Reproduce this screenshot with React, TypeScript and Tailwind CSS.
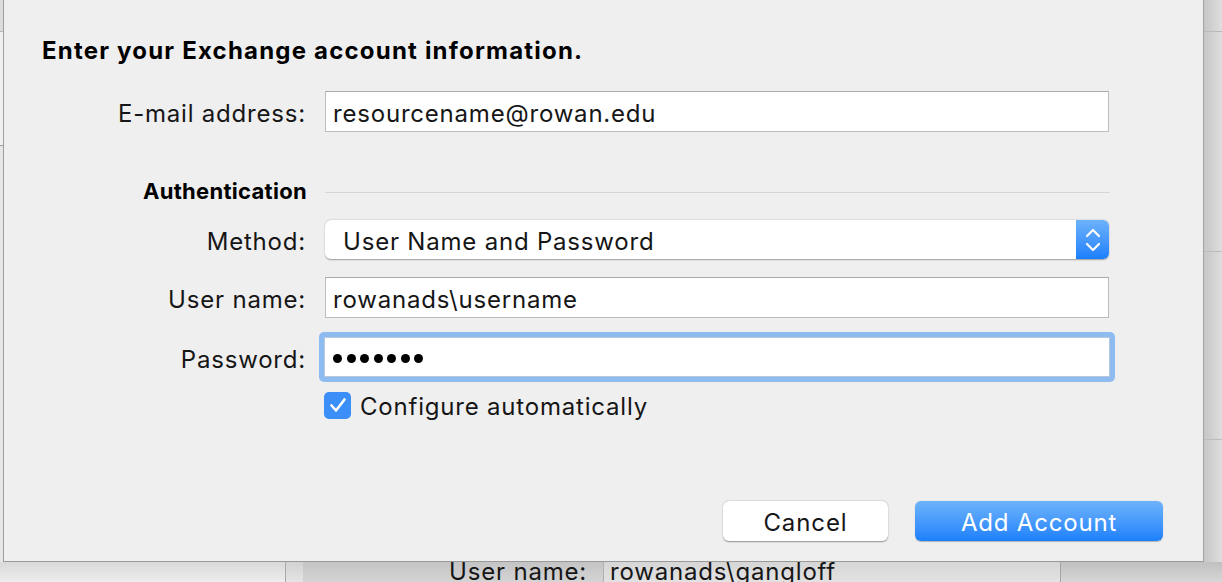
import React from 'react';

const font = { fontFamily: 'Inter, "Noto Sans", sans-serif' };

function Field({ children, className = '' }: { children?: React.ReactNode; className?: string }) {
  return (
    <div
      className={`h-[41px] w-[784px] bg-white border border-[#bdbdbd] border-t-[#a9a9a9] flex items-center pl-[7px] pt-[4px] text-[24px] tracking-[0.8px] text-[#161616] ${className}`}
    >
      {children}
    </div>
  );
}

function Row({ label, children, className = '' }: { label: string; children: React.ReactNode; className?: string }) {
  return (
    <div className={`flex items-center ${className}`}>
      <div className="w-[302px] text-right text-[24px] tracking-[0.8px] text-[#161616] leading-none pt-[5px]">{label}</div>
      <div className="ml-[19px]">{children}</div>
    </div>
  );
}

function Stepper() {
  return (
    <div className="w-[33px] h-full rounded-r-[6px] bg-gradient-to-b from-[#6cb2fb] to-[#1a7ffb] flex items-center justify-center">
      <svg width="16" height="26" viewBox="0 0 16 26" fill="none" stroke="white" strokeWidth="2.2" strokeLinecap="round" strokeLinejoin="round">
        <path d="M2 9 L8 3 L14 9" />
        <path d="M2 17 L8 23 L14 17" />
      </svg>
    </div>
  );
}

export default function App() {
  return (
    <div className="w-[1222px] h-[582px] overflow-hidden bg-[#d4d4d4] flex flex-col" style={font}>
      <div className="flex h-[562px]">
        {/* background window, left sliver */}
        <div className="w-[3px] flex flex-col">
          <div className="h-[32px] bg-[#dcdcdc] border-b border-[#b5b5b5]" />
          <div className="h-[114px] bg-[#f0f0f0] border-b border-[#9c9c9c]" />
          <div className="flex-1 bg-[#e6e6e6]" />
        </div>
        {/* sheet */}
        <div className="w-[1201px] bg-[#efefef] border-l border-[#9e9e9e] border-r border-r-[#a3a3a3] border-b border-b-[#9a9a9a] flex flex-col">
          <div className="ml-[38px] mt-[37px] text-[24px] font-bold text-black leading-[28px] tracking-[1.2px]">
            Enter your Exchange account information.
          </div>

          <Row label="E-mail address:" className="mt-[26px]">
            <Field>resourcename@rowan.edu</Field>
          </Row>

          <div className="flex items-center mt-[48px]">
            <div className="w-[303px] text-right text-[22px] font-bold text-black leading-none tracking-[0.3px] pb-[3px]">Authentication</div>
            <div className="ml-[18px] w-[785px] h-px bg-[#d6d6d6]" />
          </div>

          <Row label="Method:" className="mt-[15px]">
            <div className="h-[39px] w-[784px] bg-white rounded-[6px] shadow-[0_0.5px_1.5px_rgba(0,0,0,0.35)] flex items-center">
              <div className="flex-1 pl-[18px] pt-[4px] text-[24px] tracking-[0.8px] text-[#161616]">User Name and Password</div>
              <Stepper />
            </div>
          </Row>

          <Row label="User name:" className="mt-[18px]">
            <Field>rowanads\username</Field>
          </Row>

          <Row label="Password:" className="mt-[14px]">
            <div className="-ml-[6px] p-[5px] rounded-[5px] bg-[#8fbcf0]">
              <div className="h-[40px] w-[786px] bg-white border border-[#b8c8dc] flex items-center pl-[8px] pt-[3px] gap-[4.5px]">
                {[0, 1, 2, 3, 4, 5, 6].map((i) => (
                  <span key={i} className="w-[9px] h-[9px] rounded-full bg-black" />
                ))}
              </div>
            </div>
          </Row>

          <div className="flex items-center mt-[9px] ml-[320px]">
            <div className="w-[27px] h-[27px] rounded-[5px] bg-[#3c8ef8] flex items-center justify-center">
              <svg width="18" height="16" viewBox="0 0 18 16" fill="none" stroke="white" strokeWidth="2.6" strokeLinecap="round" strokeLinejoin="round">
                <path d="M2.5 8.5 L7 13.5 L15.5 2.5" />
              </svg>
            </div>
            <div className="ml-[9px] text-[24px] tracking-[0.8px] text-[#161616] leading-none pt-[4px]">Configure automatically</div>
          </div>

          <div className="flex justify-end mt-[82px] mr-[40px] gap-[27px]">
            <button className="w-[165px] h-[40px] rounded-[6px] bg-white shadow-[0_0.5px_1.5px_rgba(0,0,0,0.4)] text-[24px] tracking-[0.9px] text-[#161616] pt-[3px]">
              Cancel
            </button>
            <button className="w-[248px] h-[40px] rounded-[6px] bg-gradient-to-b from-[#6db3fa] to-[#1a80fb] shadow-[0_0.5px_1px_rgba(0,0,0,0.25)] text-[24px] tracking-[0.8px] text-white pt-[3px]">
              Add Account
            </button>
          </div>
        </div>
        {/* background window, right sliver */}
        <div className="flex-1 flex flex-col bg-gradient-to-r from-[#c6c6c6] to-[#dedede]">
          <div className="h-[32px] border-b border-[#b9b9b9]" />
          <div className="h-[220px] border-b border-[#bdbdbd]" />
          <div className="h-[188px] border-b border-[#bdbdbd]" />
          <div className="flex-1" />
        </div>
      </div>
      {/* background window, bottom sliver */}
      <div className="flex h-[20px]">
        <div className="w-[286px] bg-gradient-to-b from-[#d9d9d9] to-[#ededed] border-r border-[#a8a8a8]" />
        <div className="w-[17px] bg-gradient-to-b from-[#d2d2d2] to-[#e4e4e4]" />
        <div className="w-[758px] bg-gradient-to-b from-[#c4c4c4] to-[#d4d4d4] border-r border-[#a6a6a6] flex items-center overflow-hidden">
          <div className="w-[284px] text-right text-[24px] leading-[20px] tracking-[0.8px] text-[#161616]">User name:</div>
          <div className="ml-[16px] h-[20px] flex-1 bg-gradient-to-b from-[#d6d6d6] to-[#e2e2e2] border-l border-[#b0b0b0] pl-[6px] flex items-center overflow-hidden">
            <span className="text-[24px] leading-[20px] tracking-[0.8px] text-[#161616]">rowanads\gangloff</span>
          </div>
        </div>
        <div className="flex-1 bg-gradient-to-b from-[#c0c0c0] to-[#d6d6d6]" />
      </div>
    </div>
  );
}
